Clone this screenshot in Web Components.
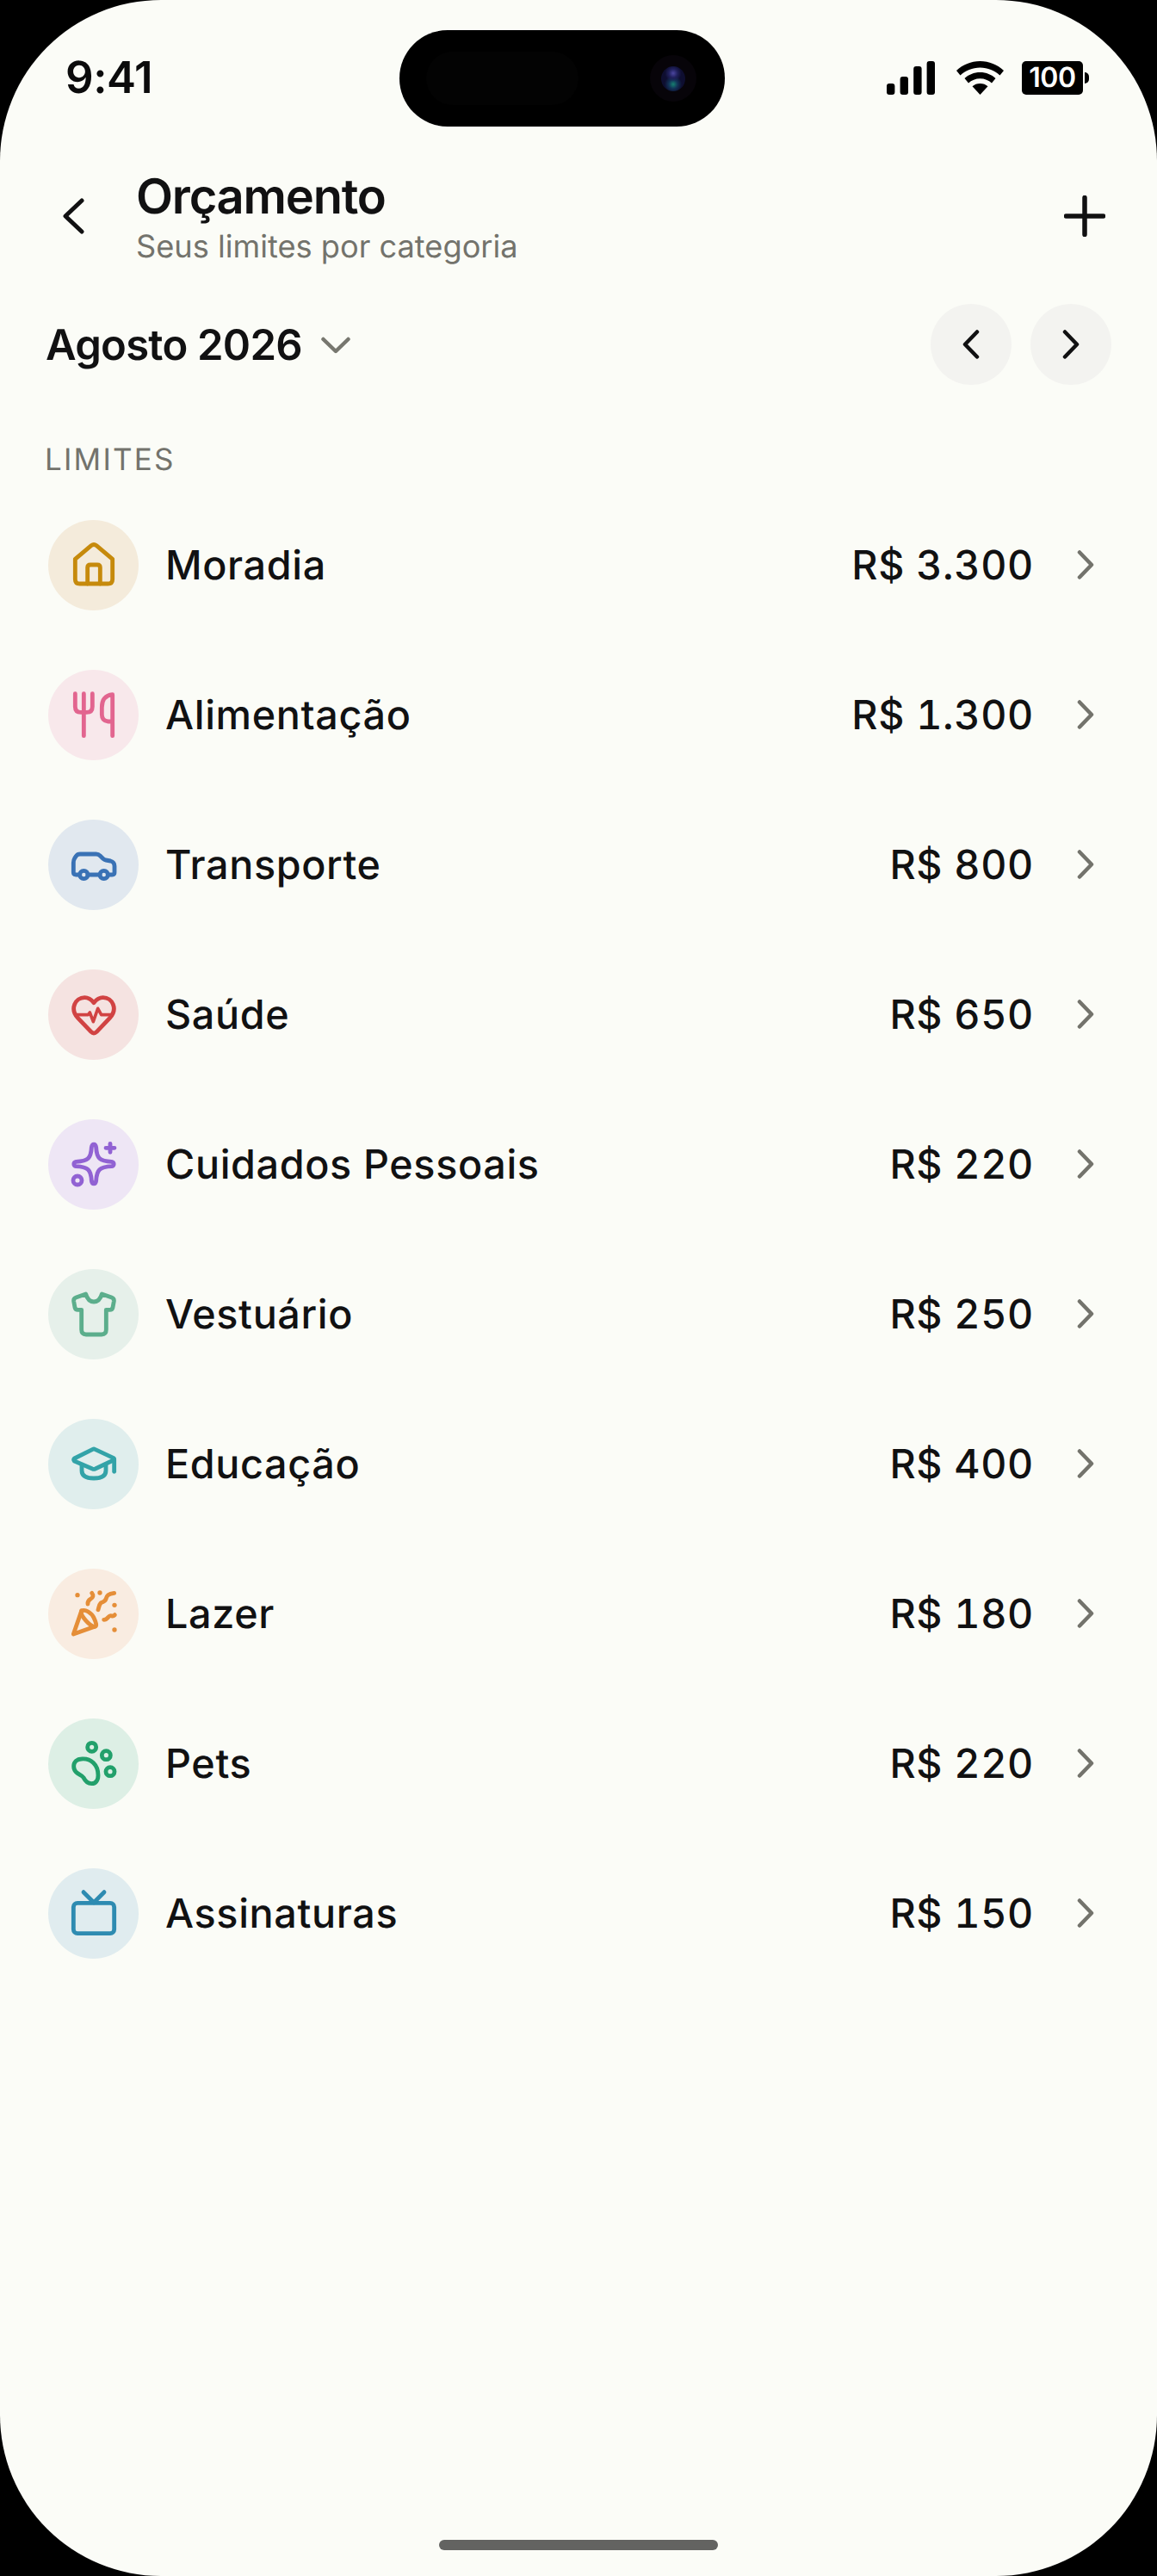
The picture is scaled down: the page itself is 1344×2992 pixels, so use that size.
<!DOCTYPE html>
<html lang="pt-BR"><head><meta charset="utf-8"><title>Orçamento</title>
<style>
html,body{margin:0;padding:0;background:#000}
body{width:1344px;height:2992px;overflow:hidden;font-family:Inter,"Liberation Sans",sans-serif;color:#111112;text-rendering:geometricPrecision}
</style></head>
<body>
<phone-screen>
  <status-bar></status-bar>
  <app-header title="Orçamento" subtitle="Seus limites por categoria"></app-header>
  <month-row label="Agosto 2026"></month-row>
  <section-label>LIMITES</section-label>
  <limit-list>
    <limit-row name="Moradia" amount="R$ 3.300" icon="house" color="#C68A0C" bg="#F4EBDB"></limit-row>
    <limit-row name="Alimentação" amount="R$ 1.300" icon="food" color="#E2658F" bg="#F8E8EB"></limit-row>
    <limit-row name="Transporte" amount="R$ 800" icon="car" color="#3A72B5" bg="#E1E8EF"></limit-row>
    <limit-row name="Saúde" amount="R$ 650" icon="heart" color="#D14343" bg="#F5E3E1"></limit-row>
    <limit-row name="Cuidados Pessoais" amount="R$ 220" icon="spark" color="#9162D3" bg="#EEE6F5"></limit-row>
    <limit-row name="Vestuário" amount="R$ 250" icon="shirt" color="#5CAE8C" bg="#E6F0EA"></limit-row>
    <limit-row name="Educação" amount="R$ 400" icon="cap" color="#33A3A8" bg="#E0EEED"></limit-row>
    <limit-row name="Lazer" amount="R$ 180" icon="party" color="#E58E38" bg="#F9ECE1"></limit-row>
    <limit-row name="Pets" amount="R$ 220" icon="paw" color="#22A06B" bg="#DDEFE5"></limit-row>
    <limit-row name="Assinaturas" amount="R$ 150" icon="tv" color="#2E8BB1" bg="#E0ECEF"></limit-row>
  </limit-list>
  <home-bar></home-bar>
</phone-screen>
<script>
const def=(name,html)=>customElements.define(name,class extends HTMLElement{
  connectedCallback(){ if(this.shadowRoot) return; const r=this.attachShadow({mode:'open'});
    r.innerHTML=typeof html==='function'?html(this):html; }
});
const ICONS={
house:`<path d="M-65 -20 L-9 -67 Q0 -74 9 -67 L65 -20 V50 Q65 66 49 66 H-49 Q-65 66 -65 50 Z"/><path d="M-22 66 V10 Q-22 0 -12 0 H12 Q22 0 22 10 V66"/>`,
food:`<path d="M-65 -73 V-28 Q-65 -8 -45 -8 H-25 Q-5 -8 -5 -28 V-73"/><path d="M-35 -73 V74"/><path d="M65 74 V-70 Q28 -66 28 -25 V0 Q28 22 50 24 H65"/>`,
car:`<circle cx="-35" cy="36" r="14"/><circle cx="35" cy="36" r="14"/><path d="M-49 36 H-62 Q-71 36 -71 27 V-6 Q-71 -15 -66 -23 L-62 -29 Q-57 -36 -48 -36 H8 Q16 -36 22 -30 L32 -20 Q36 -16 42 -15 L58 -12 Q72 -8 72 6 V28 Q72 36 63 36 H49 M-21 36 H21"/>`,
heart:`<path d="M0 66 Q-5 66 -10 61 L-55 14 C-85 -18 -65 -58 -32 -58 C-18 -58 -8 -50 0 -40 C8 -50 18 -58 32 -58 C65 -58 85 -18 55 14 L10 61 Q5 66 0 66 Z"/><path d="M-64 2 H-20 L-14 -6 L-2 26 L14 -20 L26 2 H64" stroke-width="11"/>`,
spark:`<path d="M-8 -58 C-10 -20 -20 -10 -62 -8 C-72 -6 -72 6 -62 8 C-20 10 -10 20 -8 58 C-6 72 6 72 8 58 C10 20 20 10 62 8 C72 6 72 -6 62 -8 C20 -10 10 -20 8 -58 C6 -72 -6 -72 -8 -58 Z"/><path d="M57 -71 V-41 M42 -56 H72"/><circle cx="-57" cy="57" r="15"/>`,
shirt:`<path d="M-28 -69 Q-20 -42 0 -42 Q20 -42 28 -69 L62 -57 Q71 -54 70 -44 L66 -22 Q64 -14 56 -14 H43 V55 Q43 72 27 72 H-27 Q-43 72 -43 55 V-14 H-56 Q-64 -14 -66 -22 L-70 -44 Q-71 -54 -62 -57 Z"/>`,
cap:`<path d="M-4 -50 Q0 -52 4 -50 L68 -20 Q72 -16 68 -12 L5 18 Q0 20 -5 18 L-68 -9 Q-72 -14 -68 -18 Z"/><path d="M71 -16 V28"/><path d="M-42 4 V24 Q-42 51 0 51 Q42 51 42 24 V4"/>`,
party:`<path d="M-71 72 L-43 -9 C-30 -16 -8 -2 0 15 C8 32 12 44 3 46 Z"/><path d="M-43 -9 C-50 6 -12 46 3 46" /><path d="M-7 -71 Q3 -58 -12 -50 Q-22 -44 -21 -33"/><path d="M71 -71 C50 -68 45 -62 42 -50 C38 -38 30 -42 24 -36 C18 -30 18 -22 15 -13"/><path d="M35 22 C48 22 50 8 58 8 C64 8 66 12 73 5"/><g fill="currentColor" stroke="none"><circle cx="-57" cy="-64" r="8"/><circle cx="21" cy="-72" r="8"/><circle cx="72" cy="-29" r="8"/><circle cx="72" cy="57" r="8"/></g>`,
paw:`<circle cx="-7" cy="-56" r="15"/><circle cx="43" cy="-28" r="15"/><circle cx="57" cy="29" r="15"/><path d="M-43 -15 C-10 -18 15 5 15 42 C15 62 5 71 -8 71 C-22 71 -30 62 -36 50 C-42 38 -70 38 -70 10 C-70 -5 -58 -15 -43 -15 Z"/>`,
tv:`<rect x="-71" y="-35" width="142" height="106" rx="14"/><path d="M-36 -73 L0 -37 L36 -73"/>`
};
def('phone-screen',`<style>:host{display:flex;flex-direction:column;position:relative;width:1344px;height:2992px;background:#FBFCF7;border-radius:187px;overflow:hidden}
.island{position:absolute;left:464px;top:35px;width:378px;height:112px;border-radius:56px;background:#000}
.sensor{position:absolute;left:31px;top:25px;width:177px;height:62px;border-radius:31px;background:#030303}
.cam{position:absolute;left:291px;top:29px;width:54px;height:54px;border-radius:50%;background:#070409}
.lens{position:absolute;left:13px;top:13px;width:28px;height:29px;border-radius:50%;background:radial-gradient(circle at 50% 28%,#4c46a0 0,#20205c 20%,transparent 38%),radial-gradient(circle at 50% 72%,#168070 0,#123458 20%,transparent 40%),#0e0e30}
</style><slot></slot><div class="island"><div class="sensor"></div><div class="cam"><div class="lens"></div></div></div>`);
def('status-bar',`<style>:host{display:flex;align-items:center;justify-content:space-between;height:180px;padding:0 78px 0 76px;box-sizing:border-box;flex:none}
.t{font:600 51px/1 Inter,sans-serif;color:#0b0b0c;letter-spacing:-.4px}
.r{display:flex;align-items:center;gap:0;height:39px}
svg{display:block;fill:#000}
.bat{position:relative;width:71px;height:39px;border-radius:5px;background:#000;margin-left:21px;margin-right:8px;display:flex;align-items:center;justify-content:center;color:#fff;font:600 32px/1 Inter,sans-serif;letter-spacing:-.4px}
.cap{position:absolute;left:73px;top:13px;width:5px;height:13px;background:#000;border-radius:0 7px 7px 0}
</style><span class="t">9:41</span><div class="r">
<svg width="56" height="39" viewBox="0 0 56 39"><rect x="0" y="26" width="9.4" height="13" rx="3"/><rect x="15.6" y="18" width="9.4" height="21" rx="3"/><rect x="31.2" y="6" width="9.4" height="33" rx="3"/><rect x="46.6" y="0" width="9.4" height="39" rx="3"/></svg>
<svg style="margin-left:25px" width="55" height="39" viewBox="0 0 55 39"><path d="M27.5 0C17 0 7.5 4 0 11l4.5 5.5C10.500 11 18.500 7.500 27.500 7.500S44.500 11 50.500 16.500L55 11C47.500 4 38 0 27.500 0Z"/><path d="M27.500 13C20.500 13 14 15.700 9.500 20l4.500 5.500C17.500 22.300 22.300 20.300 27.500 20.300S37.500 22.300 41 25.500L45.500 20C41 15.700 34.500 13 27.500 13Z"/><path d="M27.500 26C24 26 20.800 27.200 18.500 29.300L27.500 39L36.500 29.300C34.200 27.200 31 26 27.500 26Z"/></svg>
<div class="bat">100<span class="cap"></span></div></div>`);
def('app-header',h=>`<style>:host{display:flex;align-items:center;height:108px;margin-top:17px;padding:0 60px 0 73px;box-sizing:border-box;flex:none}
svg{display:block;fill:none;stroke:#111112;stroke-linecap:round;stroke-linejoin:round}
.tx{flex:1;margin-left:60px;display:flex;flex-direction:column}
.a{font:600 56px/66px Inter,sans-serif;letter-spacing:-1.200px;color:#111112}
.b{font:400 36.200px/42px Inter,sans-serif;color:#73736C;margin-top:4px}
</style><svg width="25" height="42" viewBox="0 0 25 42" stroke-width="5"><path d="M22 3 L3 21 L22 39"/></svg>
<div class="tx"><span class="a">${h.getAttribute('title')}</span><span class="b">${h.getAttribute('subtitle')}</span></div>
<svg width="48" height="48" viewBox="0 0 48 48" stroke-width="5.500"><path d="M24 2.500 V45.500 M2.500 24 H45.500"/></svg>`);
def('month-row',h=>`<style>:host{display:flex;align-items:center;height:94px;margin-top:48px;padding:0 53px 0 53px;box-sizing:border-box;flex:none}
.l{font:600 49px/1 Inter,sans-serif;letter-spacing:-.75px;color:#111112}
.c{display:block;margin-left:22px;margin-top:2px;flex:none}
.sp{flex:1}
.n{width:94px;height:94px;border-radius:50%;background:#F3F3F0;display:flex;align-items:center;justify-content:center}
.n+.n{margin-left:22px}
svg{display:block;fill:none;stroke-linecap:round;stroke-linejoin:round}
</style><span class="l">${h.getAttribute('label')}</span>
<svg class="c" width="34" height="20" viewBox="0 0 34 20" stroke="#77776F" stroke-width="4.500"><path d="M2.500 3 L17 17 L31.500 3"/></svg><span class="sp"></span>
<div class="n"><svg width="20" height="34" viewBox="0 0 20 34" stroke="#111112" stroke-width="4.500"><path d="M17 2.500 L3 17 L17 31.500"/></svg></div>
<div class="n"><svg width="20" height="34" viewBox="0 0 20 34" stroke="#111112" stroke-width="4.500"><path d="M3 2.500 L17 17 L3 31.500"/></svg></div>`);
def('section-label',`<style>:host{display:block;margin-top:66px;padding-left:52px;font:400 35px/42px Inter,sans-serif;letter-spacing:2.200px;color:#73736C;flex:none}</style><slot></slot>`);
def('limit-list',`<style>:host{display:flex;flex-direction:column;margin-top:14px;flex:none}</style><slot></slot>`);
def('limit-row',h=>`<style>:host{display:flex;align-items:center;height:174px;padding:0 73px 0 56px;box-sizing:border-box;flex:none}
.i{width:105px;height:105px;border-radius:50%;display:flex;align-items:center;justify-content:center;background:${h.getAttribute('bg')};color:${h.getAttribute('color')};flex:none}
.i svg{display:block;fill:none;stroke:currentColor;stroke-width:14.500;stroke-linecap:round;stroke-linejoin:round}
.n{flex:1;margin-left:31px;padding-top:2px;font:450 46.700px/56px Inter,sans-serif;letter-spacing:.65px;color:#111112}
.a{padding-top:2px;font:450 46.700px/56px Inter,sans-serif;letter-spacing:.65px;font-variant-numeric:tabular-nums;color:#111112}
.c{display:block;fill:none;stroke:#73736C;stroke-width:4.500;stroke-linecap:round;stroke-linejoin:round;margin-left:50px;flex:none}
</style><div class="i"><svg width="56" height="56" viewBox="-84 -84 168 168">${ICONS[h.getAttribute('icon')]}</svg></div>
<span class="n">${h.getAttribute('name')}</span><span class="a">${h.getAttribute('amount')}</span>
<svg class="c" width="20" height="34" viewBox="0 0 20 34"><path d="M3 2.500 L17 17 L3 31.500"/></svg>`);
def('home-bar',`<style>:host{display:flex;justify-content:center;margin-top:auto;padding-bottom:30px;flex:none}div{width:324px;height:12px;border-radius:6px;background:#636361}</style><div></div>`);
</script>
</body></html>
